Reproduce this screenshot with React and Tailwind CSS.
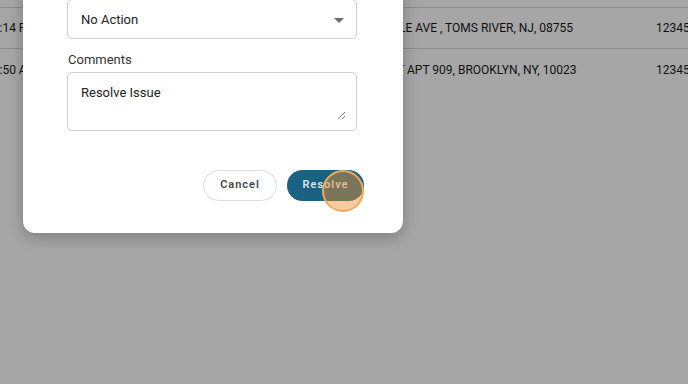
const rows = [
  { time: '04:14 PM', address: 'MAPLE AVE , TOMS RIVER, NJ, 08755', addrShift: '-ml-[24px]', id: '1234567890' },
  { time: '04:50 AM', address: 'ST APT 909, BROOKLYN, NY, 10023', addrShift: '-ml-[7px]', id: '1234567891' },
]

function Row({ row, last }) {
  return (
    <div className={`flex items-center h-[41px] text-[12px] text-[#1a1a1a] whitespace-nowrap ${last ? '' : 'border-b border-[#d9d9d9]'}`}>
      <div className="w-[411px] shrink-0 -ml-[14px]">{row.time}</div>
      <div className="w-[259px] shrink-0 overflow-visible">
        <span className={`inline-block ${row.addrShift}`}>{row.address}</span>
      </div>
      <div className="shrink-0">{row.id}</div>
    </div>
  )
}

function Caret() {
  return (
    <svg width="10" height="5" viewBox="0 0 10 5" className="fill-[#6b6b6b]">
      <path d="M0 0h10L5 5z" />
    </svg>
  )
}

function ResizeHandle() {
  return (
    <svg width="9" height="9" viewBox="0 0 9 9" className="stroke-[#8a8a8a]">
      <path d="M1 8L8 1M5 8L8 5" strokeWidth="1" />
    </svg>
  )
}

export default function App() {
  return (
    <div className="relative w-[688px] h-[384px] overflow-hidden bg-white font-['Roboto',sans-serif]">
      <div className="border-t border-[#d9d9d9] mt-[7px]">
        {rows.map((r, i) => (
          <Row key={i} row={r} last={i === rows.length - 1} />
        ))}
      </div>
      <div className="absolute inset-0 bg-black/35" />

      <div className="absolute left-[23px] top-[-19px] w-[380px] bg-white rounded-[12px] shadow-[0_4px_16px_rgba(0,0,0,0.25)] pt-[18px] pb-[32px] pl-[44px] pr-[46px]">
        <div className="h-[40px] border border-[#cfcfcf] rounded-[5px] flex items-center justify-between pt-[2px] pl-[13px] pr-[12px] text-[13px] text-[#222]">
          <span>No Action</span>
          <Caret />
        </div>
        <div className="mt-[13px] leading-[16px] text-[13px] text-[#333] pl-[1px]">Comments</div>
        <div className="mt-[4px] h-[59px] border border-[#cfcfcf] rounded-[5px] relative px-[13px] pt-[10px] text-[13px] text-[#222]">
          Resolve Issue
          <div className="absolute right-[10px] bottom-[10px] flex">
            <ResizeHandle />
          </div>
        </div>
        <div className="mt-[39px] flex justify-end gap-[10px] -mr-[7px]">
          <button className="relative w-[74px] h-[31px] rounded-full border border-[#dcdcdc] bg-white text-[11px] font-semibold tracking-[0.09em] text-[#454545]">
            Cancel
          </button>
          <button className="relative w-[77px] h-[31px] rounded-full bg-[#1b6282] text-[11px] font-semibold tracking-[0.09em] text-[#dbe6ec]">
            Resolve
            <span className="absolute left-[35px] top-[0px] w-[42px] h-[42px] rounded-full bg-[rgba(240,140,40,0.45)] border-2 border-[#f6a65a]" />
          </button>
        </div>
      </div>
    </div>
  )
}
